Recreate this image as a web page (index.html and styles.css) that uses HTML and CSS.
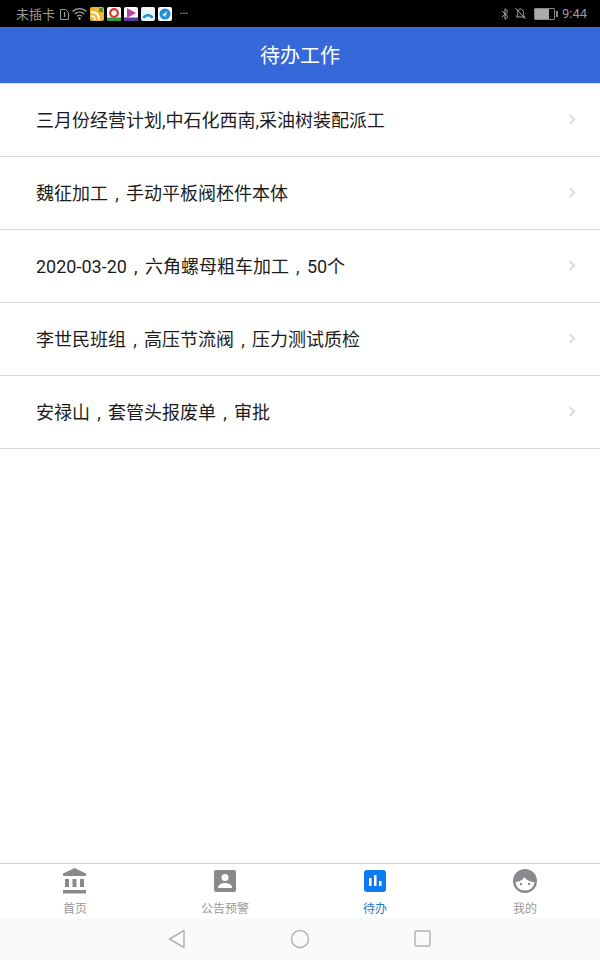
FILE: index.html
```html
<!DOCTYPE html>
<html lang="zh-CN">
<head>
  <meta charset="UTF-8">
  <title>待办工作</title>
  <link rel="stylesheet" href="styles.css">
</head>
<body>

  <!-- Status bar -->
  <div class="status-bar">
    <div class="status-left">
      <span class="carrier">未插卡</span>
      <svg class="sim" width="9" height="12" viewBox="0 0 9 12"><path d="M.5 1.500h5l3 3v7h-8z" fill="none" stroke="#9a9a9a"/><rect x="4" y="4" width="1.200" height="5" fill="#9a9a9a"/></svg>
      <svg class="wifi" width="15" height="13" viewBox="0 0 15 13" fill="none" stroke="#aaa" stroke-width="1.200"><path d="M.5 4.500a10 10 0 0 1 14 0"/><path d="M2.800 7a6.500 6.500 0 0 1 9.400 0"/><path d="M5 9.300a3.500 3.500 0 0 1 5 0"/><circle cx="7.500" cy="11.500" r=".6"/></svg>
      <svg class="app" width="14" height="14" viewBox="0 0 14 14"><rect width="14" height="14" rx="2" fill="#f2b632"/><path d="M1 5c5 0 8 3 8 8" fill="none" stroke="#fff" stroke-width="2"/><path d="M1 9c2.500 0 4 1.500 4 4" fill="none" stroke="#fff" stroke-width="1.500"/><rect x="9" y="1" width="4" height="4" fill="#5f8f3a"/></svg>
      <svg class="app" width="14" height="14" viewBox="0 0 14 14"><rect width="14" height="14" rx="2" fill="#fff"/><circle cx="7" cy="6" r="3.800" fill="none" stroke="#d8352a" stroke-width="2.200"/><rect y="10.500" width="14" height="3.500" fill="#2f9a4a"/></svg>
      <svg class="app" width="14" height="14" viewBox="0 0 14 14"><rect width="14" height="14" rx="2" fill="#fff"/><path d="M3 1l9 5-9 5z" fill="#e0358a"/><path d="M3 4l4 2-4 2z" fill="#2a7fd8"/><rect y="10.500" width="14" height="3.500" fill="#5a3aa0"/></svg>
      <svg class="app" width="14" height="14" viewBox="0 0 14 14"><rect width="14" height="14" rx="2" fill="#e8f4fc"/><path d="M2.500 11a5 5 0 0 1 9 0" fill="none" stroke="#1f8fd8" stroke-width="2.500"/></svg>
      <svg class="app" width="14" height="14" viewBox="0 0 14 14"><rect width="14" height="14" rx="2" fill="#fff"/><circle cx="7" cy="7" r="5.500" fill="#1f8fd8"/><path d="M4 8l5-4-1 6z" fill="#bfe3f7"/></svg>
      <span class="more">···</span>
    </div>
    <div class="status-right">
      <svg width="9" height="12" viewBox="0 0 9 12" fill="none" stroke="#aaa"><path d="M1 3l6 5.500-3 2.800v-10.600l3 2.800-6 5.500"/></svg>
      <svg width="13" height="13" viewBox="0 0 13 13" fill="none" stroke="#aaa"><path d="M2.500 10c1-1.500 1-3 1-4.500s1-3.500 3-3.500 3 2 3 3.500 0 3 1 4.500z"/><path d="M1.500 1l10 11"/></svg>
      <div class="battery"><div class="battery-fill"></div></div>
      <span class="time">9:44</span>
    </div>
  </div>

  <header class="title-bar">待办工作</header>

  <ul class="todo-list">
    <li class="todo-item"><span>三月份经营计划,中石化西南,采油树装配派工</span><span class="chevron"></span></li>
    <li class="todo-item"><span>魏征加工<span class="comma">,</span>手动平板阀柸件本体</span><span class="chevron"></span></li>
    <li class="todo-item"><span>2020-03-20<span class="comma">,</span>六角螺母粗车加工<span class="comma">,</span>50个</span><span class="chevron"></span></li>
    <li class="todo-item"><span>李世民班组<span class="comma">,</span>高压节流阀<span class="comma">,</span>压力测试质检</span><span class="chevron"></span></li>
    <li class="todo-item"><span>安禄山<span class="comma">,</span>套管头报废单<span class="comma">,</span>审批</span><span class="chevron"></span></li>
  </ul>

  <!-- Bottom tabs -->
  <nav class="tab-bar">
    <div class="tab">
      <svg width="26" height="26" viewBox="0 0 26 26" fill="#8a8a8e"><path d="M12.500 0l11.500 5.500v2.500h-23v-2.500z"/><rect x="3" y="11" width="4" height="8"/><rect x="10.500" y="11" width="4" height="8"/><rect x="18" y="11" width="4" height="8"/><rect x="1" y="22" width="23" height="3.500"/></svg>
      <span>首页</span>
    </div>
    <div class="tab">
      <svg width="26" height="26" viewBox="0 0 26 26"><rect x="2" y="2" width="22" height="22" rx="2" fill="#8a8a8e"/><circle cx="13" cy="9.500" r="3.500" fill="#fff"/><path d="M6 20c0-3.500 3.300-5 7-5s7 1.500 7 5z" fill="#fff"/></svg>
      <span>公告预警</span>
    </div>
    <div class="tab active">
      <svg width="26" height="26" viewBox="0 0 26 26"><rect x="2" y="2" width="22" height="22" rx="3" fill="#0a7bf0"/><rect x="7" y="10" width="2.500" height="8" fill="#fff"/><rect x="12" y="7" width="2.500" height="11" fill="#fff"/><rect x="17" y="13" width="2.500" height="5" fill="#fff"/></svg>
      <span>待办</span>
    </div>
    <div class="tab">
      <svg width="26" height="26" viewBox="0 0 26 26"><circle cx="13" cy="13" r="12" fill="#8a8a8e"/><path d="M3.500 14c3 0 7-1.500 9-5 2 3.500 6 5 10 5-.5 5-4.500 8.500-9.500 8.500s-9-3.500-9.500-8.500z" fill="#fff"/><circle cx="9" cy="16" r="1.200" fill="#8a8a8e"/><circle cx="17" cy="16" r="1.200" fill="#8a8a8e"/></svg>
      <span>我的</span>
    </div>
  </nav>

  <!-- Android navigation keys -->
  <div class="nav-keys">
    <svg width="18" height="20" viewBox="0 0 18 20" fill="none" stroke="#b4b4b4" stroke-width="1.500" stroke-linejoin="round"><path d="M16 1.500v17l-14.500-8.500z"/></svg>
    <svg width="20" height="20" viewBox="0 0 20 20" fill="none" stroke="#b4b4b4" stroke-width="1.500"><circle cx="10" cy="10" r="8.500"/></svg>
    <svg width="18" height="18" viewBox="0 0 18 18" fill="none" stroke="#b4b4b4" stroke-width="1.500"><rect x="1" y="1" width="15" height="15" rx="1.500"/></svg>
  </div>

</body>
</html>
```
FILE: styles.css
```css
body {
  margin: 0;
  width: 600px;
  height: 960px;
  display: flex;
  flex-direction: column;
  overflow: hidden;
  background-color: white;
  font-family: "Roboto", "Noto Sans CJK SC", sans-serif;
}

.status-bar {
  background-color: black;
  height: 27px;
  display: flex;
  justify-content: space-between;
  align-items: center;
  padding: 0 13px 0 16px;
  color: #9a9a9a;
  font-size: 13px;
}

.status-left, .status-right {
  display: flex;
  align-items: center;
  gap: 4px;
}

.status-left {
  gap: 3px;
}

.carrier {
  margin-right: 2px;
}

.more {
  margin-left: 4px;
  font-size: 15px;
  letter-spacing: -1px;
}

.battery {
  width: 19px;
  height: 10px;
  border: 1px solid #888;
  border-radius: 1px;
  margin-left: 3px;
  position: relative;
}

.battery::after {
  content: "";
  position: absolute;
  right: -4px;
  top: 2px;
  width: 2px;
  height: 6px;
  background-color: #888;
}

.battery-fill {
  width: 14px;
  height: 10px;
  background-color: #aaa;
}

.time {
  margin-left: 3px;
  font-size: 13px;
}

.title-bar {
  background-color: #3569da;
  color: white;
  height: 56px;
  line-height: 58px;
  text-align: center;
  font-size: 20px;
  border-bottom: 1px solid #e4e4e4;
}

.todo-list {
  list-style: none;
  margin: 0;
  padding: 0;
  flex: 1;
}

.todo-item {
  height: 69px;
  padding: 0 0 3px 36px;
  display: flex;
  justify-content: space-between;
  align-items: center;
  border-bottom: 1px solid #d9d9d9;
  color: #1c1c1c;
  font-size: 18px;
}

.comma {
  display: inline-block;
  width: 18px;
  text-align: center;
}

.chevron {
  width: 5px;
  height: 5px;
  margin: 2px 26px 0 0;
  border-top: 2px solid #dcdcdc;
  border-right: 2px solid #dcdcdc;
  transform: rotate(45deg);
}

.tab-bar {
  height: 54px;
  border-top: 1px solid #cfcfcf;
  display: grid;
  grid-template-columns: repeat(4, 1fr);
}

.tab {
  display: flex;
  flex-direction: column;
  align-items: center;
  padding-top: 4px;
  color: #999;
  font-size: 12px;
  line-height: 14px;
  gap: 8px;
}

.tab.active {
  color: #2a7cc8;
}

.nav-keys {
  height: 42px;
  background-color: #fafafa;
  display: flex;
  justify-content: center;
  align-items: center;
  gap: 104px;
}
```
